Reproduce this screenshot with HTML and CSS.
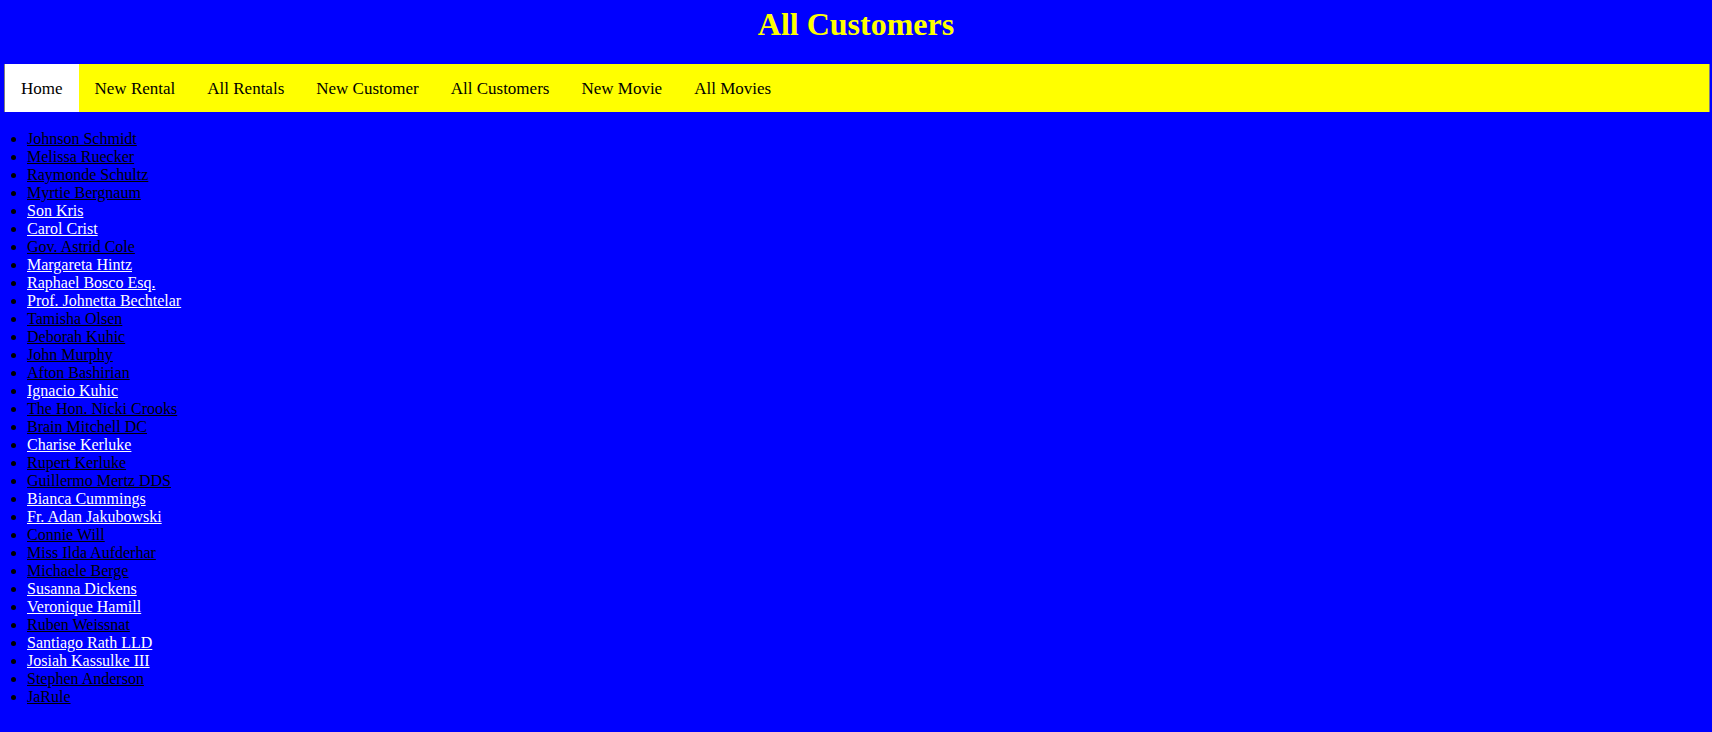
FILE: index.html
```html
<!DOCTYPE html>
<html>
<head>
<meta charset="utf-8">
<title>All Customers</title>
<link rel="stylesheet" href="styles.css">
</head>
<body>
<h1 class="title">All Customers</h1>
<nav class="nav">
  <a class="nav-item active" href="#">Home</a>
  <a class="nav-item" href="#">New Rental</a>
  <a class="nav-item" href="#">All Rentals</a>
  <a class="nav-item" href="#">New Customer</a>
  <a class="nav-item" href="#">All Customers</a>
  <a class="nav-item" href="#">New Movie</a>
  <a class="nav-item" href="#">All Movies</a>
</nav>
<ul class="customers">
  <li><a class="dark" href="#">Johnson Schmidt</a></li>
  <li><a class="dark" href="#">Melissa Ruecker</a></li>
  <li><a class="dark" href="#">Raymonde Schultz</a></li>
  <li><a class="dark" href="#">Myrtie Bergnaum</a></li>
  <li><a class="light" href="#">Son Kris</a></li>
  <li><a class="light" href="#">Carol Crist</a></li>
  <li><a class="dark" href="#">Gov. Astrid Cole</a></li>
  <li><a class="light" href="#">Margareta Hintz</a></li>
  <li><a class="light" href="#">Raphael Bosco Esq.</a></li>
  <li><a class="light" href="#">Prof. Johnetta Bechtelar</a></li>
  <li><a class="dark" href="#">Tamisha Olsen</a></li>
  <li><a class="dark" href="#">Deborah Kuhic</a></li>
  <li><a class="dark" href="#">John Murphy</a></li>
  <li><a class="dark" href="#">Afton Bashirian</a></li>
  <li><a class="light" href="#">Ignacio Kuhic</a></li>
  <li><a class="dark" href="#">The Hon. Nicki Crooks</a></li>
  <li><a class="dark" href="#">Brain Mitchell DC</a></li>
  <li><a class="light" href="#">Charise Kerluke</a></li>
  <li><a class="dark" href="#">Rupert Kerluke</a></li>
  <li><a class="dark" href="#">Guillermo Mertz DDS</a></li>
  <li><a class="light" href="#">Bianca Cummings</a></li>
  <li><a class="light" href="#">Fr. Adan Jakubowski</a></li>
  <li><a class="dark" href="#">Connie Will</a></li>
  <li><a class="dark" href="#">Miss Ilda Aufderhar</a></li>
  <li><a class="dark" href="#">Michaele Berge</a></li>
  <li><a class="light" href="#">Susanna Dickens</a></li>
  <li><a class="light" href="#">Veronique Hamill</a></li>
  <li><a class="dark" href="#">Ruben Weissnat</a></li>
  <li><a class="light" href="#">Santiago Rath LLD</a></li>
  <li><a class="light" href="#">Josiah Kassulke III</a></li>
  <li><a class="dark" href="#">Stephen Anderson</a></li>
  <li><a class="dark" href="#">JaRule</a></li>
</ul>
</body>
</html>
```
FILE: styles.css
```css
html, body {
  margin: 0;
  padding: 0;
  background: #0000ff;
  font-family: "Liberation Serif", "Times New Roman", serif;
  font-size: 16px;
  color: #000;
}

.title {
  margin: 6px 0 21px;
  text-align: center;
  color: #ffff00;
  font-size: 32px;
  font-weight: bold;
  line-height: 37px;
}

.nav {
  display: flex;
  margin: 0 2px 0 4px;
  height: 48px;
  background: #ffff00;
  border-left: 1px solid #808080;
  border-right: 1px solid #808080;
}

.nav-item {
  display: block;
  padding: 16px 16px 14px;
  font-size: 17px;
  line-height: 18px;
  color: #000;
  text-decoration: none;
}

.nav-item.active {
  background: #ffffff;
}

.customers {
  margin: 18px 0 0;
  padding-left: 27px;
  line-height: 18px;
}

.customers a {
  text-decoration: underline;
}

.customers a.dark {
  color: #000;
}

.customers a.light {
  color: #fff;
}
```
